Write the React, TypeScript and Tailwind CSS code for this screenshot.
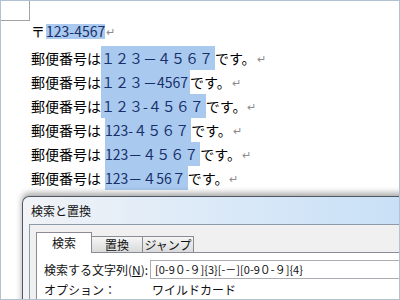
const jp = { fontFamily: '"Noto Sans CJK JP", "Noto Sans", sans-serif' };

const rows = [
  { hl: "１２３－４５６７", gap: false },
  { hl: "１２３－4567", gap: false },
  { hl: "１２３-４５６７", gap: false },
  { hl: "123-４５６７", gap: true },
  { hl: "123－４５６７", gap: true },
  { hl: "123－４56７", gap: true },
];

function Ret() {
  return <span className="ml-[1px] text-[11px] text-[#8c8c8c]">↵</span>;
}

function Tab({ label, active }: { label: string; active?: boolean }) {
  if (active) {
    return (
      <div className="-mb-px flex h-[21px] w-[56px] items-center justify-center border border-b-0 border-[#898c95] bg-white text-[12px] text-[#111]">
        {label}
      </div>
    );
  }
  return (
    <div className="flex h-[16px] w-[51px] items-center justify-center border border-b-0 border-l-0 border-[#898c95] bg-gradient-to-b from-[#f6f6f6] to-[#dadada] text-[12px] text-[#111]">
      {label}
    </div>
  );
}

export default function App() {
  return (
    <div
      lang="ja"
      style={jp}
      className="relative h-[300px] w-[400px] overflow-hidden border border-[#b2c2d3] bg-white text-black"
    >
      {/* page corner mark */}
      <div className="h-[20px] w-[29px] border-b border-r border-[#a3a3a3]" />

      <div className="flex flex-col pl-[30px] text-[14px]">
        <div className="flex h-[20px] items-center">
          <span className="w-[15px]">〒</span>
          <span className="flex h-[15px] items-center bg-[#a9c9ef] text-[#17306a]">123-4567</span>
          <Ret />
        </div>

        <div className="mt-[5px] flex flex-col">
          {rows.map((r, i) => (
            <div key={i} className="flex h-[24px] items-stretch">
              <span className="flex items-center">郵便番号は</span>
              <span
                className={`flex items-center bg-[#a9c9ef] pr-[2px] text-[#17306a] ${r.gap ? "ml-[4px]" : ""}`}
              >
                {r.hl}
              </span>
              <span className="flex items-center">
                です。
                <Ret />
              </span>
            </div>
          ))}
        </div>
      </div>

      {/* find & replace dialog */}
      <div className="absolute left-[21px] top-[195px] flex h-[120px] w-[400px] flex-col rounded-tl-[7px] border-l border-t border-[#4f5863] bg-gradient-to-r from-[#f1f3f6] via-[#dae9f8] to-[#c6dff6] pl-[6px] shadow-[0_-3px_6px_rgba(0,0,0,0.35)]">
        <div className="flex h-[27px] items-center pl-[2px] text-[12px] text-[#111]">検索と置換</div>
        <div className="flex flex-1 flex-col border-l border-t border-[#8d9aa7] bg-[#f0f0f0] pl-[6px] pt-[7px]">
          <div className="relative z-10 flex items-end">
            <Tab label="検索" active />
            <Tab label="置換" />
            <Tab label="ジャンプ" />
          </div>
          <div className="flex-1 border-l border-t border-[#898c95] bg-white pl-[7px] pt-[7px] text-[12px] text-[#111]">
            <div className="grid grid-cols-[106px_1fr] items-center">
              <span>
                検索する文字列(<span className="underline">N</span>):
              </span>
              <div className="flex h-[19px] items-center border border-[#abadb3] pl-[4px] text-[11px]">
                [0-9０-９]{"{3}"}[-－][0-9０-９]{"{4}"}
              </div>
              <span className="flex h-[21px] items-center">オプション：</span>
              <span className="flex h-[21px] items-center pl-[2px]">ワイルドカード</span>
            </div>
          </div>
        </div>
      </div>
    </div>
  );
}
